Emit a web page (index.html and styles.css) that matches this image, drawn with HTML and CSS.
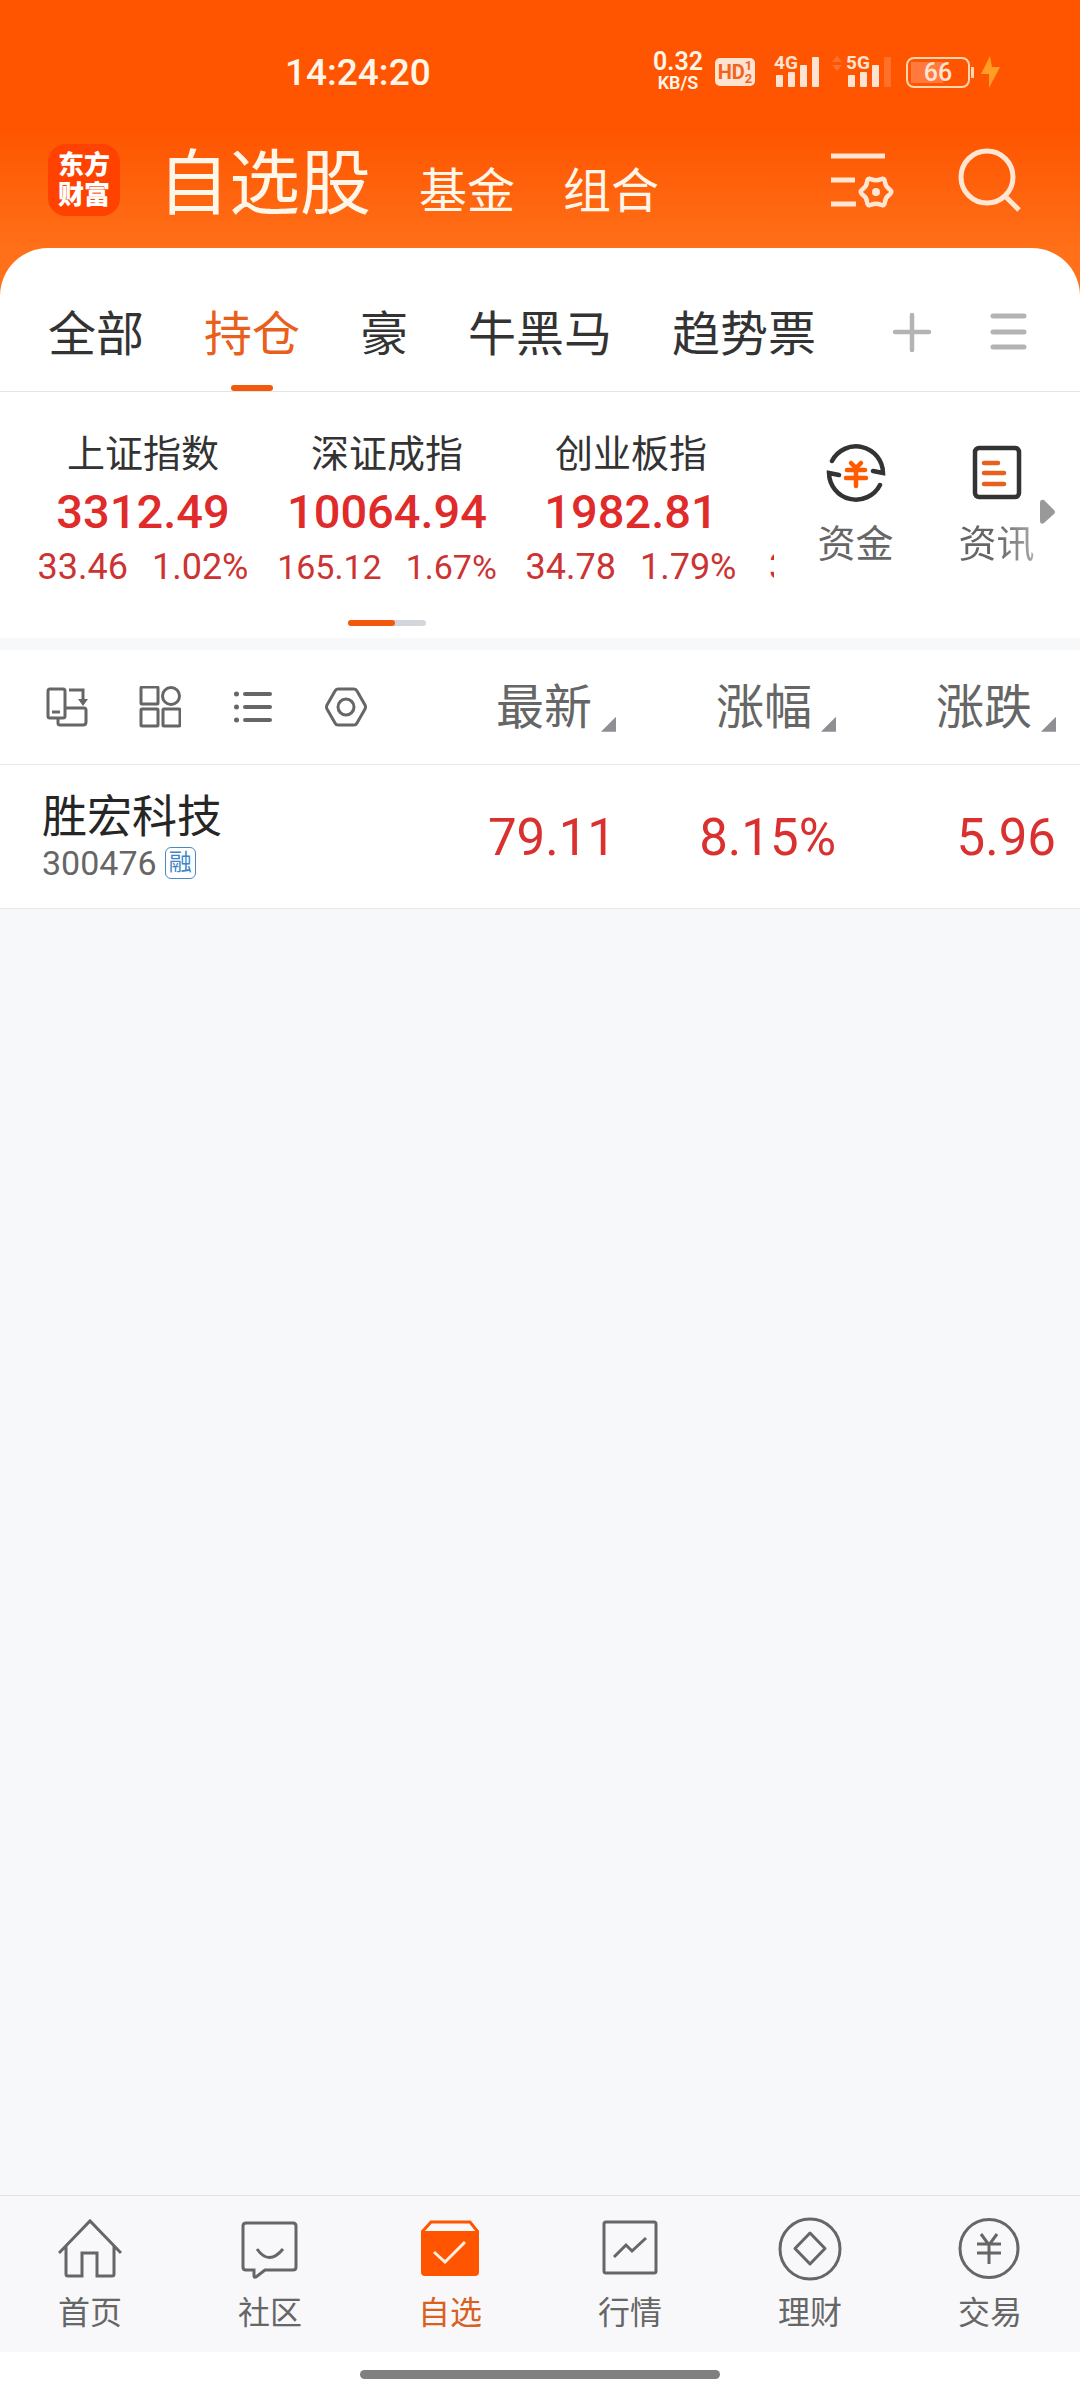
FILE: index.html
```html
<!DOCTYPE html>
<html lang="zh-CN">
<head>
<meta charset="utf-8">
<meta name="viewport" content="width=device-width, initial-scale=1">
<title>自选股</title>
<link rel="stylesheet" href="styles.css">
</head>
<body>
<header class="top">
  <div class="status">
    <time class="clock">14:24:20</time>
    <div class="status-right">
      <div class="speed"><span class="speed-value">0.32</span><span class="speed-unit">KB/S</span></div>
      <div class="hd"><span class="hd-label">HD</span><span class="hd-sims"><span>1</span><span>2</span></span></div>
      <div class="signal">
        <span class="net">4G</span>
        <svg width="44" height="32" viewBox="0 0 44 32" fill="currentColor"><rect x="1" y="19" width="7" height="12" rx="1"/><rect x="13" y="16" width="7" height="15" rx="1"/><rect x="25" y="9" width="7" height="22" rx="1"/><rect x="37" y="1" width="7" height="30" rx="1"/></svg>
      </div>
      <svg class="traffic" width="12" height="32" viewBox="0 0 12 32" fill="currentColor"><path d="M1 6 6 0l5 6zM1 9h10l-5 6z"/></svg>
      <div class="signal">
        <span class="net">5G</span>
        <svg width="44" height="32" viewBox="0 0 44 32" fill="currentColor"><rect x="1" y="19" width="7" height="12" rx="1"/><rect x="13" y="16" width="7" height="15" rx="1"/><rect x="25" y="9" width="7" height="22" rx="1"/><rect x="37" y="1" width="7" height="30" rx="1" opacity=".2"/></svg>
      </div>
      <div class="battery">66</div>
      <svg class="bolt" width="20" height="32" viewBox="0 0 20 32"><path fill="#ff9d24" d="M9 0 0 18h8v14L19 11h-8z"/></svg>
    </div>
  </div>
  <div class="titlebar">
    <div class="logo">东方<br>财富</div>
    <nav class="sections">
      <a class="section current" href="#stocks">自选股</a>
      <a class="section" href="#funds">基金</a>
      <a class="section" href="#combos">组合</a>
    </nav>
    <div class="tools">
      <button class="icon-button" aria-label="设置">
        <svg width="66" height="72" viewBox="0 0 66 72" fill="none" stroke="currentColor" stroke-width="5"><path d="M0 12h54M0 36h24M0 60h25"/><path transform="translate(45 48) scale(.9) translate(-45 -48)" d="M60 45Q64 48 60 51Q55.400 54 55 59Q54.500 64.500 50 62Q45 60 40 62Q35.500 64.500 35 59Q34.600 54 30 51Q26 48 30 45Q34.600 42 35 37Q35.500 31.500 40 34Q45 36 50 34Q54.500 31.500 55 37Q55.400 42 60 45Z"/><circle cx="45" cy="48" r="4" fill="currentColor" stroke="none"/></svg>
      </button>
      <button class="icon-button" aria-label="搜索">
        <svg width="66" height="72" viewBox="0 0 66 72" fill="none" stroke="currentColor" stroke-width="5"><circle cx="29" cy="33" r="26"/><path d="M47 52 61 66"/></svg>
      </button>
    </div>
  </div>
</header>

<main class="sheet">
  <nav class="tabs">
    <a class="tab" href="#all">全部</a>
    <a class="tab active" href="#hold">持仓</a>
    <a class="tab" href="#hao">豪</a>
    <a class="tab" href="#horse">牛黑马</a>
    <a class="tab" href="#trend">趋势票</a>
    <div class="tab-tools">
      <button class="icon-button" aria-label="添加分组"><svg width="40" height="40" viewBox="0 0 40 40" fill="none" stroke="currentColor" stroke-width="4.500" stroke-linecap="round"><path d="M20 3v35M3 20h34"/></svg></button>
      <button class="icon-button" aria-label="管理分组"><svg width="40" height="40" viewBox="0 0 40 40" fill="none" stroke="currentColor" stroke-width="5" stroke-linecap="round"><path d="M5 4h31M5 20h31M5 35h31"/></svg></button>
    </div>
  </nav>

  <section class="market">
    <div class="indices">
      <div class="index-list">
        <article class="index"><h2>上证指数</h2><strong>3312.49</strong><p><span>33.46</span><span>1.02%</span></p></article>
        <article class="index"><h2>深证成指</h2><strong>10064.94</strong><p class="compact"><span>165.12</span><span>1.67%</span></p></article>
        <article class="index"><h2>创业板指</h2><strong>1982.81</strong><p><span>34.78</span><span>1.79%</span></p></article>
        <article class="index next"><p>3</p></article>
      </div>
      <div class="pager"><span></span></div>
    </div>
    <div class="shortcuts">
      <a class="shortcut" href="#capital">
        <svg width="60" height="60" viewBox="0 0 60 60" fill="none" stroke="#333" stroke-width="4.500" stroke-linecap="round" stroke-linejoin="miter"><path d="M6 18A27 27 0 0 1 57 30L47 28M54 42A27 27 0 0 1 3 30L13 32"/><path stroke="#ff5a00" d="m25 20 5 5 5-5M21 27h18M20 35h20M30 26v17"/></svg>
        <span>资金</span>
      </a>
      <a class="shortcut news" href="#news">
        <svg width="60" height="60" viewBox="0 0 60 60" fill="none" stroke="#333" stroke-width="4.500" stroke-linecap="round"><rect x="8" y="5" width="44" height="49" rx="4"/><path stroke="#e8601c" d="M17 20h14M17 30h20M17 41h20"/></svg>
        <span>资讯</span>
      </a>
      <svg class="more" width="16" height="26" viewBox="0 0 16 26"><path fill="#999" d="M0 4Q0 0 4 1L14 11q2 2 0 4L4 24q-4 2-4-2z"/></svg>
    </div>
  </section>

  <table class="stocks">
    <thead>
      <tr>
        <th class="name-col">
          <div class="views">
            <button class="icon-button" aria-label="横屏"><svg width="42" height="42" viewBox="0 0 42 42" fill="none" stroke="currentColor" stroke-width="3"><rect x="2" y="3" width="17" height="29" rx="2"/><path d="M6 26h8"/><path d="M23 4h14v11"/><path fill="currentColor" stroke="none" d="M32 13h10l-5 7z"/><path d="M20 22h18q2 0 2 2v12q0 3-3 3H14q-2 0-2-2v-5"/></svg></button>
            <button class="icon-button" aria-label="宫格"><svg width="42" height="42" viewBox="0 0 42 42" fill="none" stroke="currentColor" stroke-width="3"><rect x="2" y="1" width="17" height="17" rx="1"/><circle cx="32" cy="10" r="8.500"/><rect x="2" y="23" width="17" height="17" rx="1"/><rect x="24" y="23" width="17" height="17" rx="1"/></svg></button>
            <button class="icon-button" aria-label="列表"><svg width="42" height="42" viewBox="0 0 42 42" fill="none" stroke="currentColor" stroke-width="4" stroke-linecap="round"><path d="M13 8h25M13 21h25M13 34h25"/><path stroke-width="5" d="M4.500 8h0M4.500 21h0M4.500 34h0"/></svg></button>
            <button class="icon-button" aria-label="表头设置"><svg width="42" height="42" viewBox="0 0 42 42" fill="none" stroke="currentColor" stroke-width="3" stroke-linejoin="round"><path d="M13 3h16q2 0 3 2l8 14q1 2 0 4l-8 14q-1 2-3 2H13q-2 0-3-2L2 23q-1-2 0-4l8-14q1-2 3-2z"/><circle cx="21" cy="21" r="8"/></svg></button>
          </div>
        </th>
        <th><button class="sort">最新</button></th>
        <th><button class="sort">涨幅</button></th>
        <th><button class="sort">涨跌</button></th>
      </tr>
    </thead>
    <tbody>
      <tr>
        <td class="name-col"><div class="stock-name">胜宏科技</div><div class="stock-code">300476<span class="badge">融</span></div></td>
        <td>79.11</td>
        <td>8.15%</td>
        <td>5.96</td>
      </tr>
    </tbody>
  </table>
</main>

<nav class="bottom-nav">
  <a href="#home"><svg width="64" height="64" viewBox="0 0 64 64"><path d="M1 36 32 4l31 32M8 29v28q0 2 2 2h14V36h15v23h15q2 0 2-2V29"/></svg>首页</a>
  <a href="#community"><svg width="64" height="64" viewBox="0 0 64 64"><path d="M16 53H8q-3 0-3-3V9q0-3 3-3h47q3 0 3 3v41q0 3-3 3H27l-9 7q-2 1-2-1z"/><path d="M19 32q12 17 26 0"/></svg>社区</a>
  <a class="active" href="#watch" aria-current="page"><svg width="64" height="64" viewBox="0 0 64 64"><path d="M4 15 13 5h39l8 10"/><path fill="currentColor" stroke="none" d="M3 14h58v41q0 4-4 4H7q-4 0-4-4z"/><path stroke="#fff0e0" d="m16 35 11 10 20-20"/></svg>自选</a>
  <a href="#quotes"><svg width="64" height="64" viewBox="0 0 64 64"><rect x="6" y="5" width="52" height="51" rx="2"/><path d="m16 40 12-12 6 6 14-13"/></svg>行情</a>
  <a href="#wealth"><svg width="64" height="64" viewBox="0 0 64 64"><circle cx="32" cy="32" r="30"/><path stroke-linejoin="round" d="m32 16 15 15.500L32 47 17 31.500z"/></svg>理财</a>
  <a href="#trade"><svg width="64" height="64" viewBox="0 0 64 64"><circle cx="31" cy="31.500" r="29"/><path d="m23 17 8 11 8-11M19 27h24M19 36h24M31 27v20"/></svg>交易</a>
</nav>
<div class="gesture"><span></span></div>
</body>
</html>
```
FILE: styles.css
```css
* { box-sizing: border-box; }

body {
  margin: 0;
  min-height: 100vh;
  display: flex;
  flex-direction: column;
  background: #f7f8fa;
  color: #333;
  font-family: Roboto, "Noto Sans CJK SC", sans-serif;
}

a { color: inherit; text-decoration: none; }
svg { display: block; flex: none; }
h2, p { margin: 0; font-weight: 400; }

button {
  padding: 0;
  border: 0;
  background: none;
  color: inherit;
  font: inherit;
}

/* Header */
.top {
  padding-bottom: 80px;
  background: linear-gradient(#ff5500 130px, #ff7019 250px);
  color: #fff6ea;
}

.status {
  display: flex;
  justify-content: space-between;
  align-items: center;
  height: 144px;
  padding: 0 79px 0 285px;
}

.clock { font-size: 37px; font-weight: 500; }

.status-right {
  display: flex;
  align-items: center;
  color: #ffe3d2;
}

.speed {
  display: flex;
  flex-direction: column;
  align-items: center;
  margin-right: 12px;
  color: #fff6ea;
  font-weight: 600;
}
.speed-value { font-size: 25px; line-height: 22px; }
.speed-unit { font-size: 18px; line-height: 20px; }

.hd {
  display: flex;
  align-items: center;
  justify-content: center;
  width: 40px;
  height: 28px;
  margin-right: 19px;
  border-radius: 5px;
  background: #ffe3d2;
  color: #f0641c;
  font-weight: 700;
}
.hd-label { font-size: 20px; }
.hd-sims { display: grid; font-size: 13px; line-height: 13px; }

.signal { position: relative; padding-left: 1px; }
.net {
  position: absolute;
  left: 0;
  top: -3px;
  font-size: 19px;
  line-height: 20px;
  font-weight: 700;
}
.traffic { margin: 0 3px 0 12px; opacity: .2; }

.battery {
  position: relative;
  width: 64px;
  height: 31px;
  margin: 0 11px 0 15px;
  border: 2px solid #ffd6b0;
  border-radius: 8px;
  background: linear-gradient(#ff7a3c, #ff7a3c) 3px 3px / 32px 21px no-repeat;
  font-size: 25px;
  line-height: 27px;
  font-weight: 500;
  text-align: center;
}
.battery::after {
  content: "";
  position: absolute;
  left: 63px;
  top: 8px;
  width: 3px;
  height: 11px;
  background: #ffd6b0;
}

.titlebar {
  display: flex;
  align-items: center;
  height: 72px;
  padding: 0 56px 0 48px;
}

.logo {
  width: 72px;
  height: 72px;
  padding-top: 6px;
  border-radius: 18px;
  background: #ff4200;
  color: #fff;
  font-size: 26px;
  line-height: 30px;
  font-weight: 900;
  text-align: center;
}

.sections {
  display: flex;
  align-items: baseline;
  gap: 48px;
  margin-left: 38px;
  padding-top: 16px;
}
.section { font-size: 48px; line-height: 72px; }
.section.current { font-size: 71px; }

.tools {
  display: flex;
  gap: 61px;
  margin-left: auto;
  color: #ffe6d4;
}

/* Sheet */
.sheet {
  flex: 1;
  margin-top: -48px;
}

.tabs {
  display: flex;
  align-items: flex-start;
  gap: 60px;
  padding: 52px 52px 0 48px;
  border-bottom: 1px solid #e4e4e4;
  border-radius: 48px 48px 0 0;
  background: #fff;
}
.tab {
  font-size: 48px;
  line-height: 70px;
  white-space: nowrap;
}
.tab::after {
  content: "";
  display: block;
  width: 42px;
  height: 6px;
  margin: 15px auto 0;
  border-radius: 3px;
}
.tab.active { color: #e8601c; }
.tab.active::after { background: #f2590c; }
.tab-tools {
  display: flex;
  gap: 56px;
  margin: 12px 0 0 auto;
  color: #b3b3b3;
}

.market {
  display: flex;
  background: #fff;
}
.indices {
  flex: 1;
  min-width: 0;
  padding: 33px 0 12px;
}
.index-list {
  display: flex;
  overflow: hidden;
  padding-left: 21px;
}
.index {
  flex: none;
  width: 244px;
  text-align: center;
}
.index h2 { font-size: 38px; line-height: 58px; }
.index strong {
  display: block;
  color: #e02b2b;
  font-size: 47px;
  line-height: 58px;
  font-weight: 500;
}
.index p {
  display: flex;
  justify-content: center;
  gap: 24px;
  color: #cc3333;
  font-size: 36px;
  line-height: 52px;
}
.index .compact { font-size: 34px; }
.index.next { padding: 116px 0 0 16px; }
.index.next p { justify-content: flex-start; }

.pager {
  width: 78px;
  height: 6px;
  margin: 27px auto 0;
  border-radius: 3px;
  background: #d3d7db;
}
.pager span {
  display: block;
  width: 60%;
  height: 6px;
  border-radius: 3px;
  background: #f2590c;
}

.shortcuts {
  position: relative;
  display: flex;
  width: 306px;
  padding: 51px 0 0 11px;
}
.shortcut {
  display: flex;
  flex-direction: column;
  align-items: center;
  gap: 12px;
  width: 141px;
  color: #666;
  font-size: 38px;
  line-height: 58px;
}
.news span {
  background: linear-gradient(90deg, #666 50%, #aaa);
  background-clip: text;
  -webkit-background-clip: text;
  color: transparent;
}
.more {
  position: absolute;
  right: 24px;
  top: 107px;
}

/* Watch list */
.stocks {
  width: 100%;
  margin-top: 12px;
  border-collapse: collapse;
  table-layout: fixed;
  background: #fff;
}
.stocks th, .stocks td {
  width: 220px;
  padding: 0 24px 0 0;
  border-bottom: 1px solid #e8e8e8;
  text-align: right;
  font-weight: 400;
}
.stocks th {
  height: 114px;
  color: #666;
}
.stocks td {
  height: 144px;
  padding-top: 3px;
  color: #d93030;
  font-size: 51px;
}
.stocks .name-col {
  width: auto;
  padding: 0 0 0 42px;
  text-align: left;
}
.views {
  display: flex;
  gap: 51px;
  padding-left: 4px;
}
.sort {
  display: inline-flex;
  align-items: flex-end;
  gap: 9px;
  padding-top: 2px;
  font-size: 48px;
  line-height: 58px;
}
.sort::after {
  content: "";
  width: 15px;
  height: 15px;
  margin-bottom: 5px;
  background: #8e8e93;
  clip-path: polygon(100% 0, 100% 100%, 0 100%);
}
.stock-name {
  padding-top: 4px;
  color: #262626;
  font-size: 45px;
  line-height: 50px;
}
.stock-code {
  display: flex;
  align-items: center;
  gap: 8px;
  color: #666;
  font-size: 34px;
  line-height: 40px;
}
.badge {
  width: 31px;
  height: 32px;
  border: 1px solid #4a88c4;
  border-radius: 6px;
  color: #3f85c8;
  font-size: 23px;
  line-height: 30px;
  text-align: center;
}

/* Bottom bar */
.bottom-nav {
  display: flex;
  height: 157px;
  padding-top: 21px;
  border-top: 1px solid #dfe2e4;
  background: #f8f8fa;
  color: #666;
}
.bottom-nav a {
  flex: 1;
  display: flex;
  flex-direction: column;
  align-items: center;
  gap: 8px;
  font-size: 32px;
  line-height: 48px;
}
.bottom-nav svg {
  fill: none;
  stroke: currentColor;
  stroke-width: 3;
}
.bottom-nav .active { color: #d9601f; }
.bottom-nav .active svg { color: #ff5500; }

.gesture {
  height: 48px;
  padding-top: 18px;
  background: #fff;
}
.gesture span {
  display: block;
  width: 33.333%;
  height: 9px;
  margin: 0 auto;
  border-radius: 5px;
  background: #808080;
}
```
